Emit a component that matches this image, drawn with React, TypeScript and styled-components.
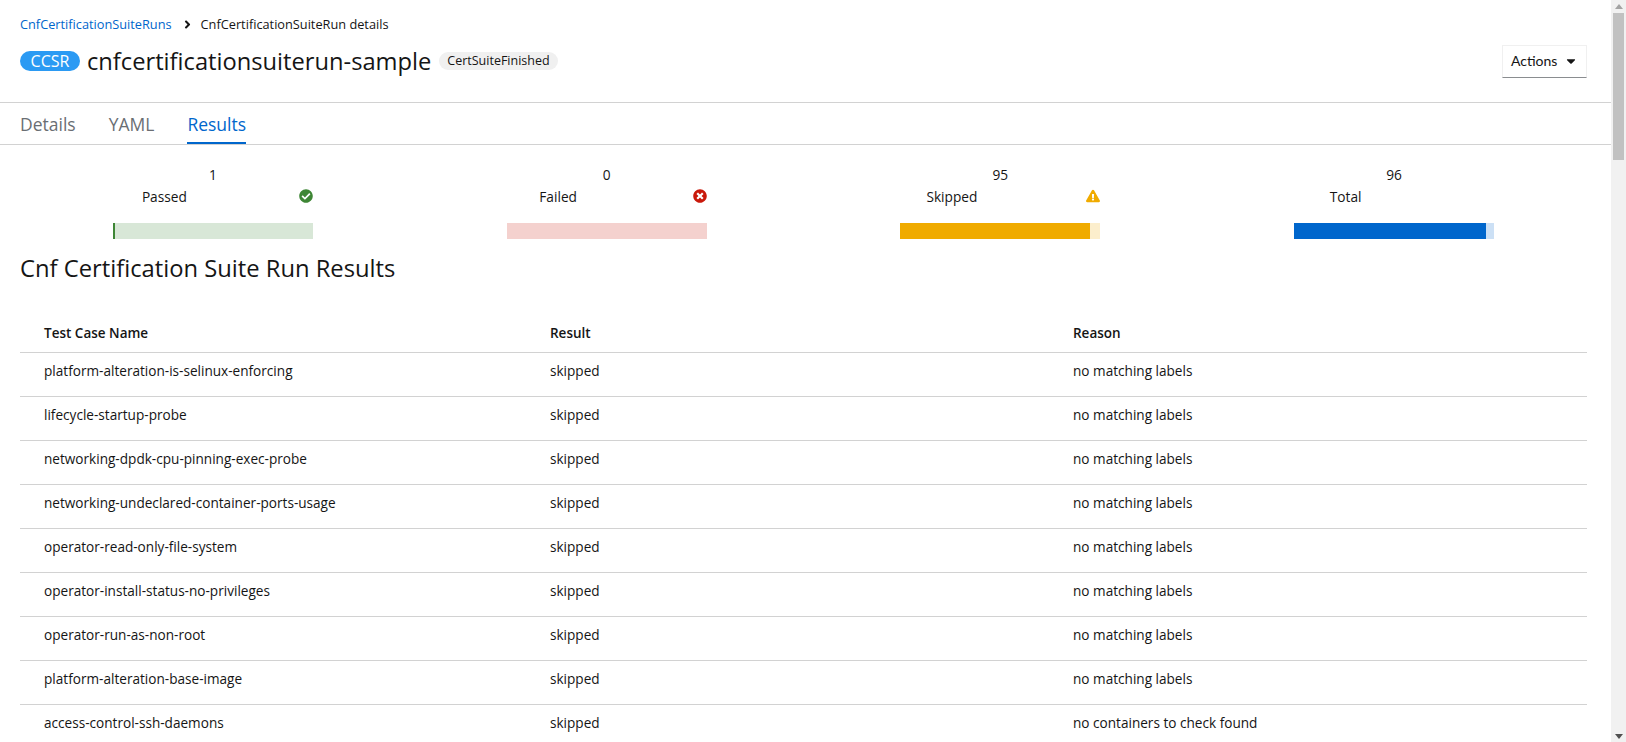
import React from 'react'
import styled, { createGlobalStyle } from 'styled-components'
import { FaAngleRight, FaCaretDown, FaCheckCircle, FaExclamationTriangle, FaTimesCircle } from 'react-icons/fa'

const GlobalStyle = createGlobalStyle`
html, body {
    margin: 0;
    height: 100%;
    overflow: hidden;
    background: #fff;
    font-family: "Open Sans", "Liberation Sans", sans-serif;
    color: #151515;
}
`
const Page = styled.div`
display: flex;
height: 742px;
overflow: hidden;
`
const Main = styled.main`
flex: 1;
min-width: 0;
overflow: hidden;
`
const Header = styled.header`
height: 103px;
box-sizing: border-box;
padding: 16px 24px 0 20px;
border-bottom: 1px solid #d2d2d2;
`
const Breadcrumb = styled.nav`
display: flex;
align-items: center;
height: 16px;
font-size: 12.75px;
`
const CrumbLink = styled.a`
color: #06c;
`
const CrumbSep = styled.span`
display: flex;
margin: 0 7px 0 9px;
font-size: 13px;
`
const TitleRow = styled.div`
display: flex;
align-items: center;
justify-content: space-between;
margin-top: 12px;
`
const TitleGroup = styled.div`
display: flex;
align-items: center;
`
const ResourceBadge = styled.span`
width: 60px;
height: 20px;
border-radius: 10px;
background: #2b9af3;
color: #fff;
font-size: 16px;
line-height: 20px;
text-align: center;
`
const Title = styled.h1`
margin: 0 8px 0 7px;
font-size: 23.7px;
font-weight: 400;
line-height: 32px;
`
const StatusPill = styled.span`
height: 18px;
padding: 0 8px;
border-radius: 9px;
background: #f0f0f0;
font-size: 12.5px;
font-weight: 500;
line-height: 18px;
`
const ActionsButton = styled.button`
display: flex;
align-items: center;
justify-content: space-between;
width: 85px;
height: 33px;
box-sizing: border-box;
padding: 0 8px 2px;
margin-top: 1px;
background: #fff;
border: 1px solid #f0f0f0;
border-bottom-color: #8a8d90;
color: #151515;
font-family: Lato, sans-serif;
font-size: 14px;
svg { font-size: 14px; }
`
const Tabs = styled.div`
display: flex;
gap: 33px;
height: 41px;
padding-left: 20px;
border-bottom: 1px solid #d2d2d2;
`
const Tab = styled.div<{ $active?: boolean }>`
height: 41px;
box-sizing: border-box;
padding-top: 9px;
font-size: 17.5px;
line-height: 24px;
color: ${p => (p.$active ? '#06c' : '#6a6e73')};
border-bottom: ${p => (p.$active ? '2px solid #06c' : 'none')};
`
const Stats = styled.section`
display: grid;
grid-template-columns: repeat(4, 393.75px);
margin: 20px 0 0 16px;
`
const Stat = styled.div`
width: 200px;
justify-self: center;
`
const StatValue = styled.div`
font-size: 13.7px;
line-height: 20px;
text-align: center;
`
const StatLabelRow = styled.div`
display: grid;
grid-template-columns: 103px 1fr;
align-items: center;
height: 22px;
font-size: 13.7px;
`
const StatLabel = styled.span`
text-align: center;
`
const StatIcon = styled.span<{ $color: string }>`
display: flex;
justify-content: flex-end;
font-size: 14px;
color: ${p => p.$color};
`
const Bar = styled.div<{ $color: string }>`
height: 16px;
margin-top: 16px;
background: ${p => p.$color};
`
const BarFill = styled.div<{ $color: string }>`
height: 100%;
background: ${p => p.$color};
`
const SectionTitle = styled.h2`
margin: 13px 0 0 20px;
font-size: 23.75px;
font-weight: 400;
line-height: 32px;
`
const Table = styled.table`
width: 1567px;
margin: 24px 0 0 20px;
border-collapse: collapse;
table-layout: fixed;
font-size: 13.6px;
th:nth-child(1) { width: 506px; }
th:nth-child(2) { width: 523px; }
`
const HeadCell = styled.th`
height: 44px;
box-sizing: border-box;
padding: 7px 24px 0;
font-size: 13.5px;
font-weight: 600;
text-align: left;
border-bottom: 1px solid #d2d2d2;
`
const Cell = styled.td`
height: 44px;
box-sizing: border-box;
padding: 0 24px 7px;
border-bottom: 1px solid #d2d2d2;
`
const ScrollTrack = styled.aside`
display: flex;
flex-direction: column;
align-items: center;
width: 15px;
height: 742px;
background: #f1f1f1;
`
const ScrollThumb = styled.div`
width: 11px;
height: 147px;
background: #c1c1c1;
`
const ScrollArrow = styled.div<{ $down?: boolean }>`
width: 0;
height: 0;
margin: ${p => (p.$down ? 'auto 0 3px' : '4px 0 4px')};
border-left: 4px solid transparent;
border-right: 4px solid transparent;
border-bottom: ${p => (p.$down ? 'none' : '5px solid #a3a3a3')};
border-top: ${p => (p.$down ? '5px solid #505050' : 'none')};
`

const stats = [
    { value: 1, label: 'Passed', icon: <FaCheckCircle />, iconColor: '#3e8635', bg: '#d8e7d7', fill: '#3e8635', pct: 1 },
    { value: 0, label: 'Failed', icon: <FaTimesCircle />, iconColor: '#c9190b', bg: '#f4d1ce', fill: '#c9190b', pct: 0 },
    { value: 95, label: 'Skipped', icon: <FaExclamationTriangle />, iconColor: '#f0ab00', bg: '#fceecc', fill: '#f0ab00', pct: 95 },
    { value: 96, label: 'Total', icon: null, iconColor: '#06c', bg: '#cce0f5', fill: '#06c', pct: 96 },
]

const rows = [
    ['platform-alteration-is-selinux-enforcing', 'no matching labels'],
    ['lifecycle-startup-probe', 'no matching labels'],
    ['networking-dpdk-cpu-pinning-exec-probe', 'no matching labels'],
    ['networking-undeclared-container-ports-usage', 'no matching labels'],
    ['operator-read-only-file-system', 'no matching labels'],
    ['operator-install-status-no-privileges', 'no matching labels'],
    ['operator-run-as-non-root', 'no matching labels'],
    ['platform-alteration-base-image', 'no matching labels'],
    ['access-control-ssh-daemons', 'no containers to check found'],
]

function App() {
    return (
        <Page>
            <GlobalStyle />
            <Main>
                <Header>
                    <Breadcrumb>
                        <CrumbLink>CnfCertificationSuiteRuns</CrumbLink>
                        <CrumbSep><FaAngleRight /></CrumbSep>
                        <span>CnfCertificationSuiteRun details</span>
                    </Breadcrumb>
                    <TitleRow>
                        <TitleGroup>
                            <ResourceBadge>CCSR</ResourceBadge>
                            <Title>cnfcertificationsuiterun-sample</Title>
                            <StatusPill>CertSuiteFinished</StatusPill>
                        </TitleGroup>
                        <ActionsButton>Actions <FaCaretDown /></ActionsButton>
                    </TitleRow>
                </Header>
                <Tabs>
                    <Tab>Details</Tab>
                    <Tab>YAML</Tab>
                    <Tab $active>Results</Tab>
                </Tabs>
                <Stats>
                    {stats.map(s => (
                        <Stat key={s.label}>
                            <StatValue>{s.value}</StatValue>
                            <StatLabelRow>
                                <StatLabel>{s.label}</StatLabel>
                                <StatIcon $color={s.iconColor}>{s.icon}</StatIcon>
                            </StatLabelRow>
                            <Bar $color={s.bg}>
                                <BarFill $color={s.fill} style={{ width: `${s.pct}%` }} />
                            </Bar>
                        </Stat>
                    ))}
                </Stats>
                <SectionTitle>Cnf Certification Suite Run Results</SectionTitle>
                <Table>
                    <thead>
                        <tr>
                            <HeadCell>Test Case Name</HeadCell>
                            <HeadCell>Result</HeadCell>
                            <HeadCell>Reason</HeadCell>
                        </tr>
                    </thead>
                    <tbody>
                        {rows.map(r => (
                            <tr key={r[0]}>
                                <Cell>{r[0]}</Cell>
                                <Cell>skipped</Cell>
                                <Cell>{r[1]}</Cell>
                            </tr>
                        ))}
                    </tbody>
                </Table>
            </Main>
            <ScrollTrack>
                <ScrollArrow />
                <ScrollThumb />
                <ScrollArrow $down />
            </ScrollTrack>
        </Page>
    )
}

export default App
